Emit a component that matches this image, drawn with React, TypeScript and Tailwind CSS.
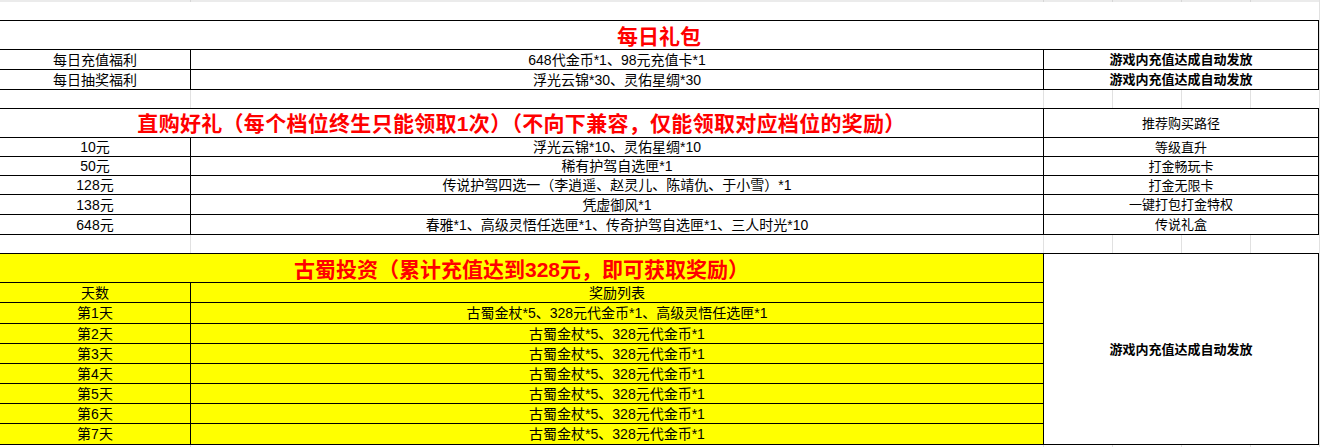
import React from "react";

const FONT = "font-['Liberation_Sans','Noto_Sans_CJK_SC',sans-serif]";

function GridRow({ h }: { h: string }) {
  return (
    <div className={`flex ${h}`}>
      <div className="w-[191px] border-r border-[#e1e1e1]" />
      <div className="w-[853px] border-r border-[#e1e1e1]" />
      <div className="w-[69px] border-r border-[#e1e1e1]" />
      <div className="w-[69px] border-r border-[#e1e1e1]" />
      <div className="w-[69px] border-r border-[#e1e1e1]" />
      <div className="w-[68px]" />
    </div>
  );
}

function Row3({
  h,
  a,
  b,
  c,
  boldC,
}: {
  h: string;
  a: string;
  b: string;
  c: string;
  boldC?: boolean;
}) {
  return (
    <div className={`flex ${h} border-b border-black`}>
      <div className="w-[191px] border-r border-black flex items-center justify-center text-[14px] leading-none">
        {a}
      </div>
      <div className="w-[853px] border-r border-black flex items-center justify-center text-[14px] leading-none whitespace-nowrap">
        {b}
      </div>
      <div
        className={`flex-1 flex items-center justify-center text-[13px] leading-none ${
          boldC ? "font-bold" : ""
        }`}
      >
        {c}
      </div>
    </div>
  );
}

export default function App() {
  const direct = [
    ["10元", "浮光云锦*10、灵佑星绸*10", "等级直升", "h-[19px]"],
    ["50元", "稀有护驾自选匣*1", "打金畅玩卡", "h-[19px]"],
    ["128元", "传说护驾四选一（李逍遥、赵灵儿、陈靖仇、于小雪）*1", "打金无限卡", "h-[19px]"],
    ["138元", "凭虚御风*1", "一键打包打金特权", "h-[20px]"],
    ["648元", "春雅*1、高级灵悟任选匣*1、传奇护驾自选匣*1、三人时光*10", "传说礼盒", "h-[20px]"],
  ];
  const invest = [
    ["天数", "奖励列表", "h-[20px]"],
    ["第1天", "古蜀金杖*5、328元代金币*1、高级灵悟任选匣*1", "h-[21px]"],
    ["第2天", "古蜀金杖*5、328元代金币*1", "h-[20px]"],
    ["第3天", "古蜀金杖*5、328元代金币*1", "h-[20px]"],
    ["第4天", "古蜀金杖*5、328元代金币*1", "h-[20px]"],
    ["第5天", "古蜀金杖*5、328元代金币*1", "h-[20px]"],
    ["第6天", "古蜀金杖*5、328元代金币*1", "h-[20px]"],
    ["第7天", "古蜀金杖*5、328元代金币*1", "h-[20px]"],
  ];

  return (
    <div className={`w-[1321px] h-[447px] bg-white text-black ${FONT} overflow-hidden`}>
      <div className="w-[1320px] border-r border-[#e1e1e1]">
        {/* top strip */}
        <div className="flex h-[2px] bg-[#ebebeb]">
          <div className="w-[191px] border-r border-[#d6d6d6]" />
          <div className="w-[853px] border-r border-[#d6d6d6]" />
          <div className="w-[69px] border-r border-[#d6d6d6]" />
          <div className="w-[69px] border-r border-[#d6d6d6]" />
          <div className="w-[69px] border-r border-[#d6d6d6]" />
          <div className="w-[68px]" />
        </div>
        <div className="h-[18px]" />

        {/* 每日礼包 */}
        <div className="w-[1319px] border-t border-r border-black">
          <div className="h-[29px] border-b border-black flex items-center justify-center pt-[2px] text-[21px] leading-none font-bold text-[#ff0000]">
            每日礼包
          </div>
          <Row3 h="h-[20px]" a="每日充值福利" b="648代金币*1、98元充值卡*1" c="游戏内充值达成自动发放" boldC />
          <Row3 h="h-[20px]" a="每日抽奖福利" b="浮光云锦*30、灵佑星绸*30" c="游戏内充值达成自动发放" boldC />
        </div>

        <GridRow h="h-[18px]" />

        {/* 直购好礼 */}
        <div className="w-[1319px] border-t border-r border-black">
          <div className="flex h-[29px] border-b border-black">
            <div className="w-[1044px] border-r border-black flex items-center justify-center text-[21px] leading-none font-bold text-[#ff0000] whitespace-nowrap tracking-[0.3px]">
              直购好礼（每个档位终生只能领取1次）（不向下兼容，仅能领取对应档位的奖励）
            </div>
            <div className="flex-1 flex items-center justify-center text-[13px] leading-none">
              推荐购买路径
            </div>
          </div>
          {direct.map(([a, b, c, h]) => (
            <Row3 key={a} h={h} a={a} b={b} c={c} />
          ))}
        </div>

        <GridRow h="h-[18px]" />

        {/* 古蜀投资 */}
        <div className="w-[1319px] border-t border-b border-r border-black flex">
          <div className="w-[1044px] border-r border-black bg-[#ffff00]">
            <div className="h-[29px] border-b border-black flex items-center justify-center pt-[2px] text-[21px] leading-none font-bold text-[#ff0000] whitespace-nowrap">
              古蜀投资（累计充值达到328元，即可获取奖励）
            </div>
            {invest.map(([a, b, h], i) => (
              <div
                key={a}
                className={`flex ${h} ${i < invest.length - 1 ? "border-b border-black" : ""}`}
              >
                <div className="w-[191px] border-r border-black flex items-center justify-center text-[14px] leading-none">
                  {a}
                </div>
                <div className="flex-1 flex items-center justify-center text-[14px] leading-none whitespace-nowrap">
                  {b}
                </div>
              </div>
            ))}
          </div>
          <div className="flex-1 flex items-center justify-center text-[13px] leading-none font-bold bg-white">
            游戏内充值达成自动发放
          </div>
        </div>

        <GridRow h="h-[3px]" />
      </div>
    </div>
  );
}
